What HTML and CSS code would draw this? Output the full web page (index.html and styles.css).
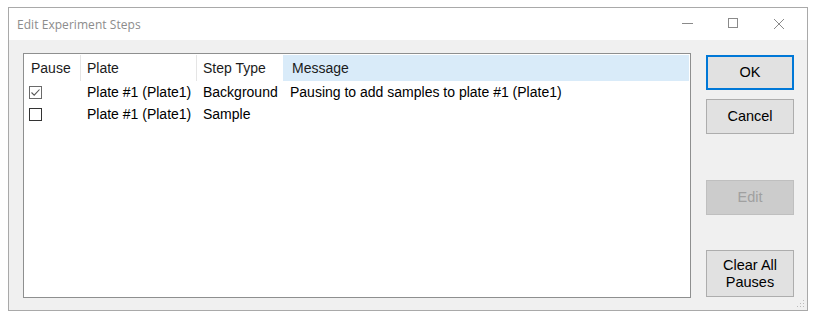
FILE: index.html
```html
<!DOCTYPE html>
<html>
<head>
<meta charset="utf-8">
<link rel="stylesheet" href="styles.css">
</head>
<body>
<div class="window">
  <div class="titlebar">
    <span class="title">Edit Experiment Steps</span>
    <div class="controls">
      <svg class="ctl" width="46" height="32" viewBox="0 0 46 32"><line x1="18" y1="15.5" x2="29" y2="15.5" stroke="#8a8a8a" stroke-width="1"/></svg>
      <svg class="ctl" width="46" height="32" viewBox="0 0 46 32"><rect x="18.5" y="10.5" width="9" height="9" fill="none" stroke="#8a8a8a" stroke-width="1"/></svg>
      <svg class="ctl" width="46" height="32" viewBox="0 0 46 32"><path d="M18 11 L28 21 M28 11 L18 21" stroke="#8a8a8a" stroke-width="1" fill="none"/></svg>
    </div>
  </div>
  <div class="content">
    <div class="list">
      <div class="grid">
        <div class="hcell first">Pause</div>
        <div class="hcell">Plate</div>
        <div class="hcell">Step Type</div>
        <div class="hcell hot">Message</div>

        <div class="cell chk"><span class="box checked"><svg width="11" height="11" viewBox="0 0 11 11"><path d="M1.5 5.5 L4.2 8.2 L9.5 2.5" stroke="#555" stroke-width="1.1" fill="none"/></svg></span></div>
        <div class="cell">Plate #1 (Plate1)</div>
        <div class="cell">Background</div>
        <div class="cell">Pausing to add samples to plate #1 (Plate1)</div>

        <div class="cell chk"><span class="box"></span></div>
        <div class="cell">Plate #1 (Plate1)</div>
        <div class="cell">Sample</div>
        <div class="cell"></div>
      </div>
    </div>
    <div class="buttons">
      <button class="btn ok">OK</button>
      <button class="btn cancel">Cancel</button>
      <button class="btn edit" disabled>Edit</button>
      <button class="btn clear">Clear All<br>Pauses</button>
    </div>
  </div>
  <svg class="grip" width="8" height="8" viewBox="0 0 8 8">
    <rect x="6" y="0" width="1" height="1" fill="#bbb"/>
    <rect x="3" y="3" width="1" height="1" fill="#bbb"/>
    <rect x="6" y="3" width="1" height="1" fill="#bbb"/>
    <rect x="0" y="6" width="1" height="1" fill="#bbb"/>
    <rect x="3" y="6" width="1" height="1" fill="#bbb"/>
    <rect x="6" y="6" width="1" height="1" fill="#bbb"/>
  </svg>
</div>
</body>
</html>
```
FILE: styles.css
```css
html, body {
  margin: 0;
  padding: 0;
  background: #ffffff;
}
body {
  font-family: "Liberation Sans", Arial, sans-serif;
  font-size: 14px;
  color: #000;
}
.window {
  position: relative;
  margin: 7px 0 0 8px;
  width: 800px;
  height: 304px;
  box-sizing: border-box;
  border: 1px solid #a9a9a9;
  display: flex;
  flex-direction: column;
  background: #f0f0f0;
}
.titlebar {
  height: 32px;
  background: #ffffff;
  display: flex;
  align-items: center;
  justify-content: space-between;
}
.title {
  font-family: "Open Sans", "Noto Sans", sans-serif;
  font-size: 12px;
  color: #8c8c8c;
  padding-left: 8px;
  letter-spacing: 0.05px;
}
.controls {
  display: flex;
  padding-right: 5px;
}
.ctl {
  display: block;
}
.content {
  flex: 1;
  display: flex;
  padding: 13px 13px 0 14px;
  gap: 15px;
}
.list {
  width: 668px;
  height: 245px;
  box-sizing: border-box;
  border: 1px solid #8e8f8f;
  background: #ffffff;
  padding: 1px 1px 0 0;
}
.grid {
  display: grid;
  grid-template-columns: 56px 116px 87px 1fr;
  grid-template-rows: 26px 22px 22px;
}
.hcell {
  border-left: 1px solid #e5e5e5;
  padding-left: 6px;
  line-height: 26px;
  color: #1b1b1b;
  white-space: nowrap;
}
.hcell.first {
  border-left: none;
  padding-left: 7px;
}
.hcell.hot {
  background: #d9ebf9;
  border-left-color: #d9ebf9;
  padding-left: 8px;
}
.cell {
  line-height: 22px;
  padding-left: 7px;
  white-space: nowrap;
}
.cell.chk {
  padding-left: 5px;
  display: flex;
  align-items: center;
}
.box {
  width: 13px;
  height: 13px;
  box-sizing: border-box;
  border: 1px solid #333333;
  background: #fff;
  display: flex;
  align-items: center;
  justify-content: center;
  margin-top: 1px;
}
.box.checked {
  border-color: #6a6a6a;
}
.box svg {
  display: block;
}
.buttons {
  display: flex;
  flex-direction: column;
  width: 88px;
  padding-top: 2px;
}
.btn {
  font-family: "Liberation Sans", Arial, sans-serif;
  font-size: 14.5px;
  color: #000;
  background: #e1e1e1;
  border: 1px solid #adadad;
  width: 88px;
  height: 35px;
  padding: 0;
  box-sizing: border-box;
  line-height: 17px;
}
.btn.ok {
  border: 2px solid #0078d7;
}
.btn.cancel {
  margin-top: 9px;
}
.btn.edit {
  margin-top: 46px;
  background: #cccccc;
  border-color: #bfbfbf;
  color: #a0a0a0;
}
.btn.clear {
  margin-top: 35px;
  height: 47px;
}
.grip {
  position: absolute;
  right: 2px;
  bottom: 2px;
}
```
